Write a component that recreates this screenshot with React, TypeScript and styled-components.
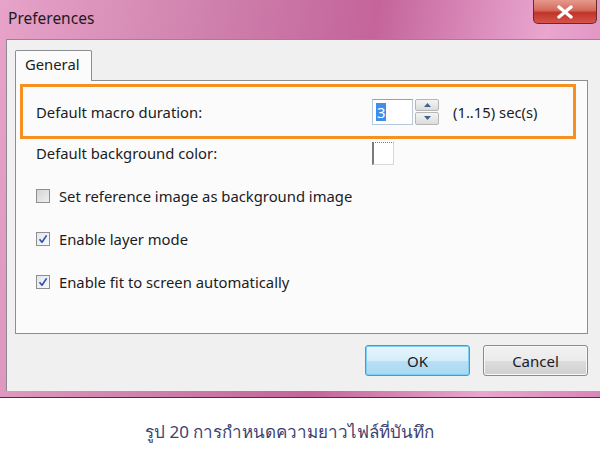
import React from 'react';
import styled, { createGlobalStyle } from 'styled-components';

const GlobalStyle = createGlobalStyle`
    html, body {
        margin: 0;
        padding: 0;
        background: #ffffff;
    }
    body {
        font-family: "Noto Sans", "DejaVu Sans", sans-serif;
        color: #1c1c24;
    }
`;

const Page = styled.div`
    width: 600px;
    height: 459px;
    overflow: hidden;
    display: flex;
    flex-direction: column;
`;

const Window = styled.div`
    width: 620px;
    height: 398px;
    box-sizing: border-box;
    display: flex;
    flex-direction: column;
    background: linear-gradient(100deg, #e7a3c9 0%, #cf82ad 30%, #c4649b 55%, #e9a6cf 80%, #d77fb4 100%);
    border-bottom: 1px solid #4a3040;
    padding: 0 0 6px 6px;
`;

const TitleBar = styled.div`
    height: 39px;
    display: flex;
    justify-content: space-between;
    align-items: flex-start;
    padding-right: 23px;
`;

const Title = styled.div`
    font-size: 15.5px;
    line-height: 36px;
    padding-left: 2px;
    color: #1e1a22;
`;

const CloseButton = styled.div`
    width: 64px;
    height: 24px;
    box-sizing: border-box;
    border: 1px solid #6a2a2a;
    border-top: none;
    border-radius: 0 0 5px 5px;
    background: linear-gradient(180deg, #e59a8c 0%, #d46a5a 45%, #c0342a 55%, #d4544a 100%);
    display: flex;
    align-items: center;
    justify-content: center;
`;

const Client = styled.div`
    flex: 1;
    background: #f0f0f0;
    border-top: 1px solid #8e8a90;
    border-left: 1px solid #8e8a90;
    box-sizing: border-box;
    padding: 10px 0 0 8px;
    display: flex;
    flex-direction: column;
`;

const TabStrip = styled.div`
    display: flex;
    height: 30px;
`;

const Tab = styled.div`
    width: 77px;
    box-sizing: border-box;
    border: 1px solid #8c8e94;
    border-bottom: none;
    border-radius: 2px 2px 0 0;
    background: #fbfbfb;
    font-size: 14.8px;
    padding: 3px 0 0 9px;
    position: relative;
    z-index: 1;
    margin-bottom: -1px;
`;

const Panel = styled.div`
    width: 573px;
    height: 254px;
    box-sizing: border-box;
    border: 1px solid #8c8e94;
    background: #fbfbfb;
    padding: 3px 0 0 4px;
`;

const Highlight = styled.div`
    width: 556px;
    height: 55px;
    box-sizing: border-box;
    border: 3px solid #f7901e;
    display: flex;
    align-items: center;
    padding-left: 13px;
`;

const Row = styled.div<{ $height: number }>`
    height: ${props => props.$height}px;
    display: flex;
    align-items: center;
    padding-left: 16px;
`;

const Label = styled.div`
    width: 336px;
    font-size: 14.8px;
`;

const SpinGroup = styled.div`
    display: flex;
    align-items: center;
    gap: 2px;
`;

const SpinInput = styled.div`
    width: 41px;
    height: 26px;
    box-sizing: border-box;
    border: 1px solid #b8c8dc;
    border-top-color: #8aa4c4;
    background: #ffffff;
    display: flex;
    align-items: center;
    padding-left: 3px;
`;

const Selected = styled.span`
    background: #3f8ee8;
    color: #ffffff;
    font-size: 14.8px;
    line-height: 18px;
    padding: 0 1px;
`;

const SpinButtons = styled.div`
    width: 24px;
    height: 26px;
    display: flex;
    flex-direction: column;
    gap: 1px;
`;

const SpinButton = styled.div`
    flex: 1;
    border: 1px solid #b6b6b6;
    border-radius: 2px;
    background: linear-gradient(180deg, #f4f4f4, #dcdcdc);
    display: flex;
    align-items: center;
    justify-content: center;
`;

const Range = styled.div`
    margin-left: 14px;
    font-size: 14.8px;
`;

const ColorSwatch = styled.div`
    width: 22px;
    height: 23px;
    box-sizing: border-box;
    border: 1px solid #d8d8d8;
    border-left: 2px solid #7a7a7a;
    border-top: 1px dotted #7a7a7a;
    background: #ffffff;
`;

const CheckRow = styled.div`
    height: 43px;
    display: flex;
    align-items: center;
    padding-left: 16px;
    gap: 9px;
    font-size: 14.8px;
`;

const Box = styled.div<{ $checked: boolean }>`
    width: 14px;
    height: 14px;
    box-sizing: border-box;
    border: 1px solid #8f8f8f;
    background: ${props => props.$checked
        ? 'linear-gradient(135deg, #e4e6ee, #f8f8fa)'
        : 'linear-gradient(135deg, #d4d4d4, #f0f0f0)'};
    display: flex;
    align-items: center;
    justify-content: center;
`;

const ButtonBar = styled.div`
    display: flex;
    gap: 13px;
    padding: 11px 0 0 350px;
`;

const Button = styled.div<{ $primary?: boolean }>`
    width: 105px;
    height: 31px;
    box-sizing: border-box;
    border-radius: 3px;
    border: 1px solid ${props => props.$primary ? '#3c9ed4' : '#8a8a8a'};
    box-shadow: ${props => props.$primary ? 'inset 0 0 0 1px #7fd0f4' : 'inset 0 0 0 1px #f8f8f8'};
    background: ${props => props.$primary
        ? 'linear-gradient(180deg, #e8f6fd 0%, #d4edfa 50%, #b8e0f6 52%, #a8d8f2 100%)'
        : 'linear-gradient(180deg, #f2f2f2 0%, #ebebeb 50%, #dddddd 52%, #cfcfcf 100%)'};
    display: flex;
    align-items: center;
    justify-content: center;
    font-size: 15px;
    color: #1a1a2a;
`;

const Caption = styled.div`
    padding: 20px 0 0 145px;
    font-size: 17px;
    color: #3d4270;
    font-family: "Noto Sans", "DejaVu Sans", sans-serif;
`;

function Check() {
    return (
        <svg width="10" height="10" viewBox="0 0 10 10">
            <path d="M1.5 5.2 L4 8.2 L8.6 1.4" fill="none" stroke="#2a4fa8" strokeWidth="1.6" strokeLinejoin="round" />
        </svg>
    );
}

function Arrow({ up }: { up: boolean }) {
    return (
        <svg width="7" height="4" viewBox="0 0 7 4">
            <path d={up ? 'M0 4 L3.5 0 L7 4 Z' : 'M0 0 L3.5 4 L7 0 Z'} fill="#44608c" />
        </svg>
    );
}

const OPTIONS = [
    { label: 'Set reference image as background image', checked: false },
    { label: 'Enable layer mode', checked: true },
    { label: 'Enable fit to screen automatically', checked: true },
];

export default function App() {
    return (
        <Page>
            <GlobalStyle />
            <Window>
                <TitleBar>
                    <Title>Preferences</Title>
                    <CloseButton>
                        <svg width="18" height="14" viewBox="0 0 18 14">
                            <path d="M3 2 L15 12 M15 2 L3 12" stroke="#ffffff" strokeWidth="3.4" strokeLinecap="round" />
                        </svg>
                    </CloseButton>
                </TitleBar>
                <Client>
                    <TabStrip>
                        <Tab>General</Tab>
                    </TabStrip>
                    <Panel>
                        <Highlight>
                            <Label>Default macro duration:</Label>
                            <SpinGroup>
                                <SpinInput><Selected>3</Selected></SpinInput>
                                <SpinButtons>
                                    <SpinButton><Arrow up /></SpinButton>
                                    <SpinButton><Arrow up={false} /></SpinButton>
                                </SpinButtons>
                            </SpinGroup>
                            <Range>(1..15) sec(s)</Range>
                        </Highlight>
                        <Row $height={28}>
                            <Label>Default background color:</Label>
                            <ColorSwatch />
                        </Row>
                        <div style={{ height: 7 }} />
                        {OPTIONS.map(option => (
                            <CheckRow key={option.label}>
                                <Box $checked={option.checked}>{option.checked ? <Check /> : null}</Box>
                                {option.label}
                            </CheckRow>
                        ))}
                    </Panel>
                    <ButtonBar>
                        <Button $primary>OK</Button>
                        <Button>Cancel</Button>
                    </ButtonBar>
                </Client>
            </Window>
            <Caption>รูป 20 การกำหนดความยาวไฟล์ที่บันทึก</Caption>
        </Page>
    );
}
